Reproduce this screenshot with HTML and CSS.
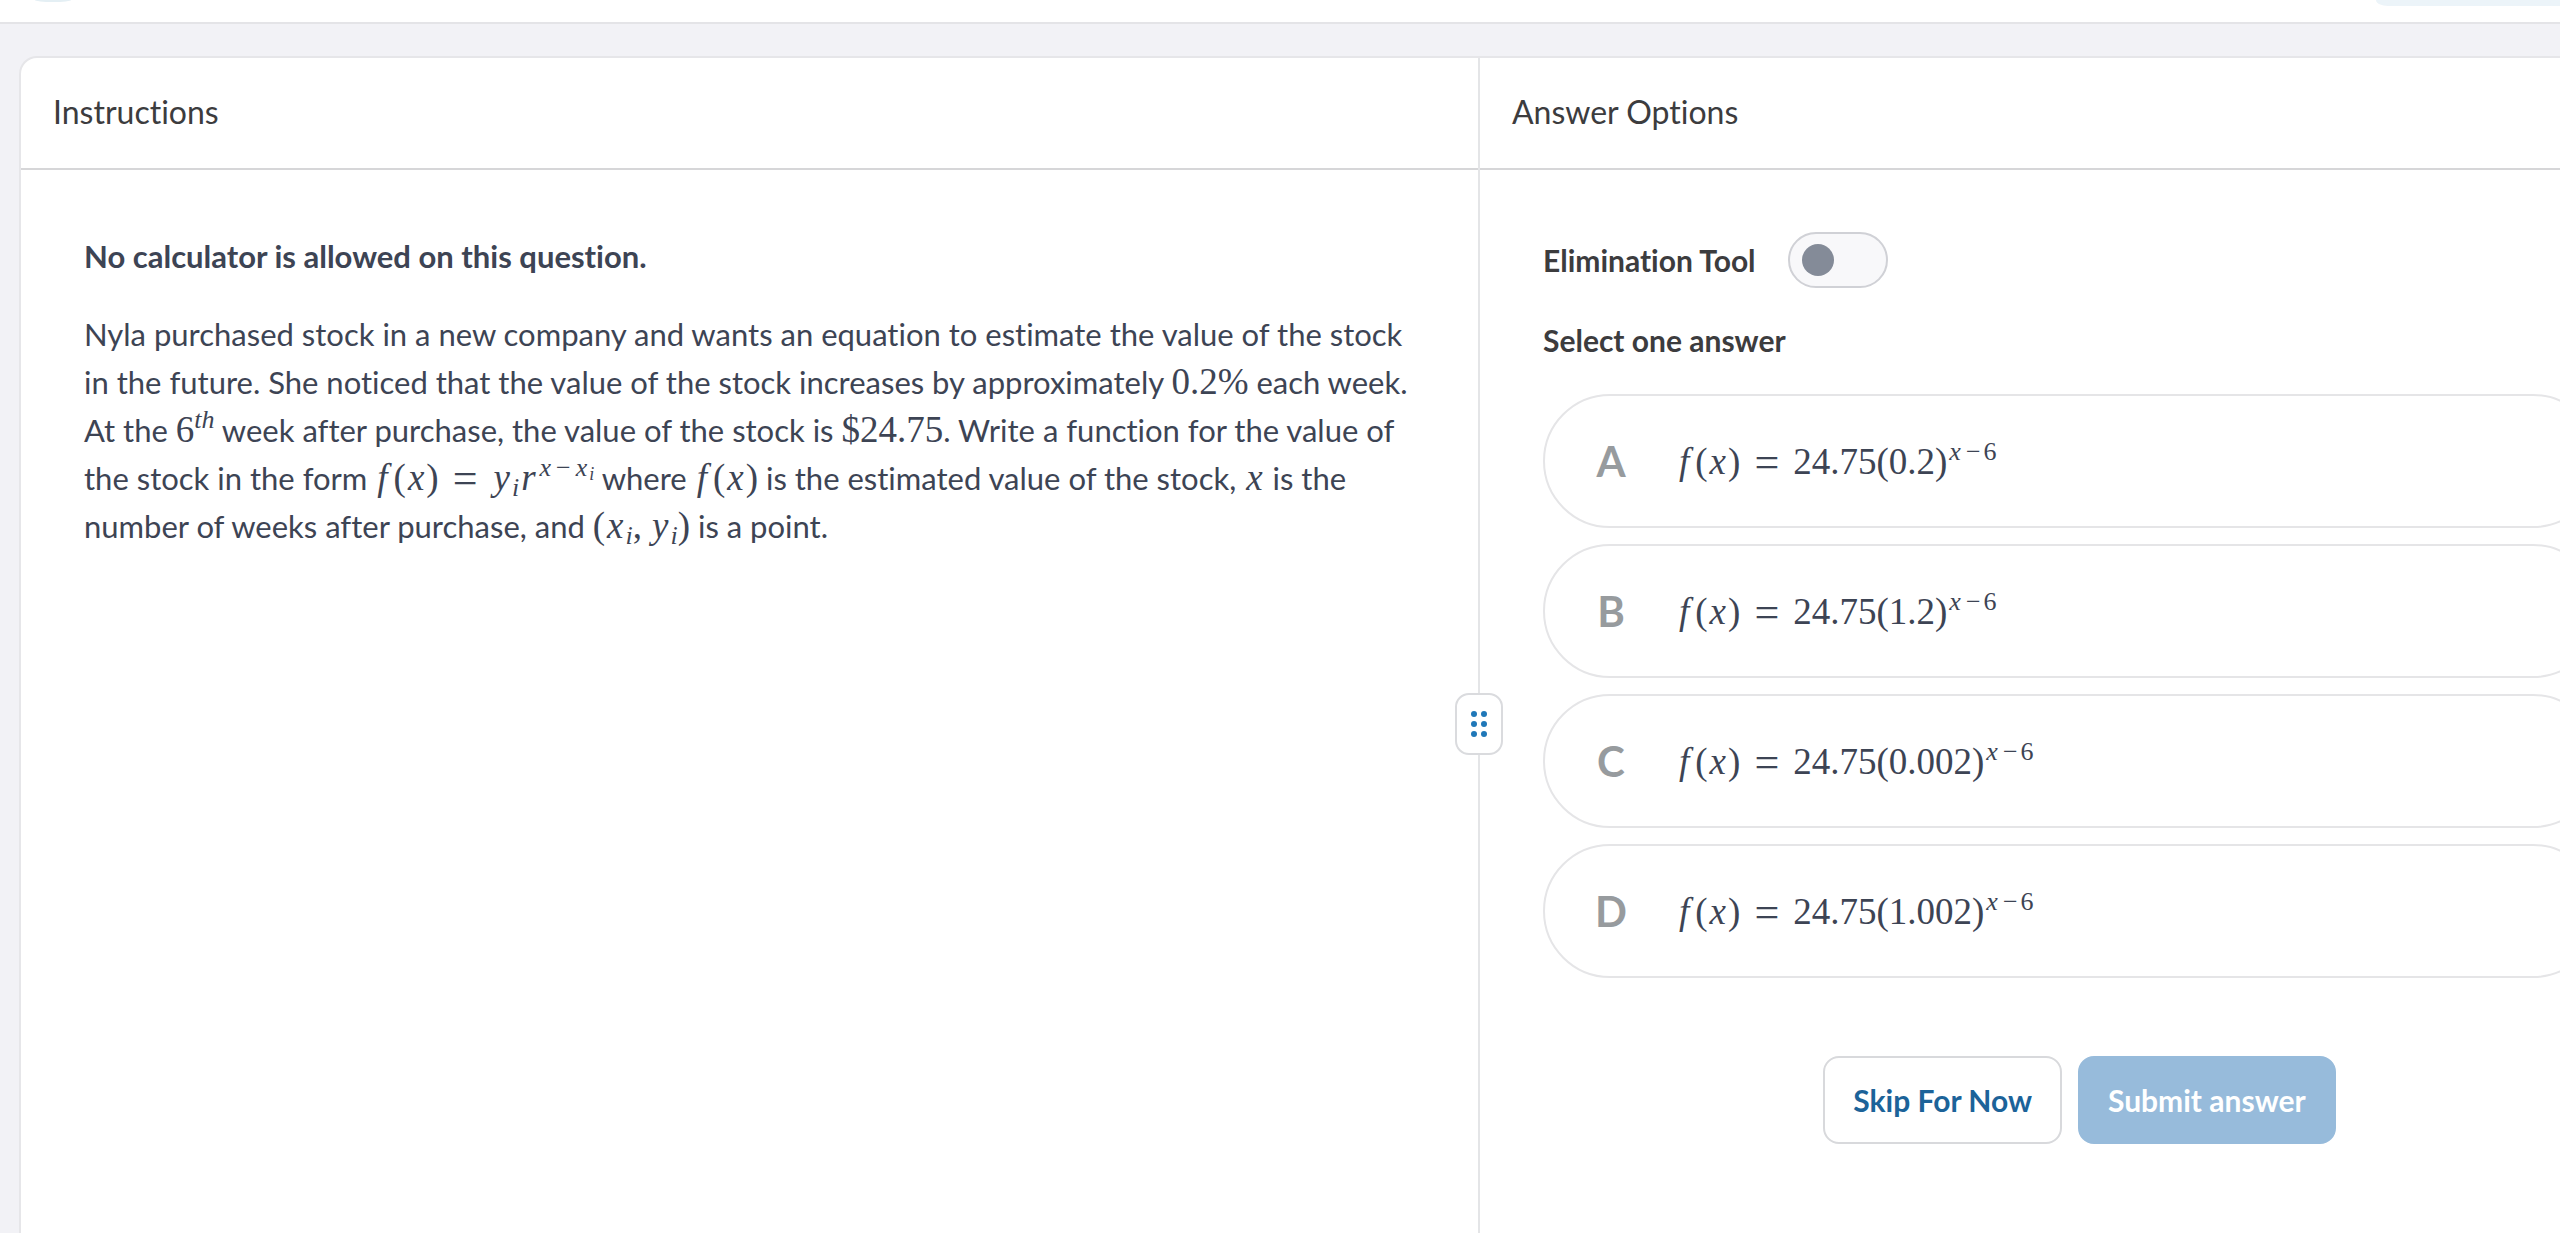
FILE: index.html
```html
<!DOCTYPE html>
<html lang="en">
<head>
<meta charset="utf-8">
<title>Practice question</title>
<link rel="stylesheet" href="styles.css">
</head>
<body>
<header class="topbar">
  <span class="topbar-logo"></span>
  <span class="topbar-pill"></span>
</header>
<main class="workspace">
  <section class="pane pane-question">
    <h2 class="pane-title">Instructions</h2>
    <div class="pane-body">
      <p class="notice">No calculator is allowed on this question.</p>
      <p class="prompt">Nyla purchased stock in a new company and wants an equation to estimate the value of the stock in the future. She noticed that the value of the stock increases by approximately <span class="math">0.2%</span> each week. At the <span class="math">6<sup><i>th</i></sup></span> week after purchase, the value of the stock is <span class="math">$24.75</span>. Write a function for the value of the stock in the form <span class="math"><i class="fn">f</i>(<i class="var">x</i>)<span class="rel">=</span><i class="var">y</i><sub><i>i</i></sub><i class="var">r</i><sup><i class="var">x</i><span class="op">−</span><i class="var">x</i><small><i>i</i></small></sup></span> where <span class="math"><i class="fn">f</i>(<i class="var">x</i>)</span> is the estimated value of the stock, <span class="math"><i class="var">x</i></span> is the number of weeks after purchase, and <span class="math">(<i class="var">x</i><sub><i>i</i></sub><span class="comma">,</span><i class="var">y</i><sub><i>i</i></sub>)</span> is a point.</p>
    </div>
  </section>
  <div class="divider">
    <button class="grip" type="button" aria-label="Resize panes">
      <svg width="16" height="26" viewBox="0 0 16 26" fill="#1f78b8"><circle cx="3" cy="3" r="3"/><circle cx="13" cy="3" r="3"/><circle cx="3" cy="13" r="3"/><circle cx="13" cy="13" r="3"/><circle cx="3" cy="23" r="3"/><circle cx="13" cy="23" r="3"/></svg>
    </button>
  </div>
  <section class="pane pane-answers">
    <h2 class="pane-title">Answer Options</h2>
    <form class="pane-body">
      <div class="tool-row">
        <label class="label" for="elimination">Elimination Tool</label>
        <input class="switch" type="checkbox" role="switch" id="elimination">
      </div>
      <fieldset class="options">
        <legend class="label">Select one answer</legend>
        <label class="option"><input class="option-input" type="radio" name="answer"><span class="letter">A</span><span class="math"><i class="fn">f</i>(<i class="var">x</i>)<span class="rel">=</span>24.75(0.2)<sup><i class="var">x</i><span class="op">−</span>6</sup></span></label>
        <label class="option"><input class="option-input" type="radio" name="answer"><span class="letter">B</span><span class="math"><i class="fn">f</i>(<i class="var">x</i>)<span class="rel">=</span>24.75(1.2)<sup><i class="var">x</i><span class="op">−</span>6</sup></span></label>
        <label class="option"><input class="option-input" type="radio" name="answer"><span class="letter">C</span><span class="math"><i class="fn">f</i>(<i class="var">x</i>)<span class="rel">=</span>24.75(0.002)<sup><i class="var">x</i><span class="op">−</span>6</sup></span></label>
        <label class="option"><input class="option-input" type="radio" name="answer"><span class="letter">D</span><span class="math"><i class="fn">f</i>(<i class="var">x</i>)<span class="rel">=</span>24.75(1.002)<sup><i class="var">x</i><span class="op">−</span>6</sup></span></label>
      </fieldset>
      <div class="actions">
        <button class="btn" type="button">Skip For Now</button>
        <button class="btn btn-primary" type="submit" disabled>Submit answer</button>
      </div>
    </form>
  </section>
</main>
</body>
</html>
```
FILE: styles.css
```css
* {
  box-sizing: border-box;
}

html {
  height: 100%;
  overflow: hidden;
}

body {
  display: flex;
  flex-direction: column;
  height: 100%;
  margin: 0;
  overflow: hidden;
  background: #f2f2f6;
  color: #3c3c3e;
  font-family: Lato, "Liberation Sans", sans-serif;
  font-size: 31px;
  font-variant-ligatures: none;
  line-height: 48px;
}

.topbar {
  display: flex;
  flex: none;
  justify-content: space-between;
  align-items: flex-start;
  height: 24px;
  padding-left: 35px;
  background: #fff;
  border-bottom: 2px solid #e4e4e7;
}

.topbar-logo {
  width: 36px;
  height: 2px;
  border-radius: 0 0 18px 18px / 0 0 2px 2px;
  background: #e4eff4;
}

.topbar-pill {
  width: 184px;
  height: 6px;
  border-bottom-left-radius: 12px 6px;
  background: #ecf4f9;
}

/* The workspace is wider than the window and runs off its right edge. */
.workspace {
  display: flex;
  flex: 1;
  width: calc(100% + 86px);
  margin: 32px 0 0 19px;
  background: #fff;
  border: 2px solid #e6e6e9;
  border-bottom: 0;
  border-radius: 18px 18px 0 0;
}

.pane {
  min-width: 0;
}

.pane-question {
  flex: 1457;
}

.pane-answers {
  flex: 1183;
}

.pane-title {
  margin: 0;
  padding: 30px 32px 32px;
  border-bottom: 2px solid #d6d6d8;
  font-size: 32px;
  font-weight: 400;
}

.pane-body {
  padding: 62px 63px;
}

.notice,
.prompt {
  margin: 0 0 30px;
  color: #3d4454;
}

.notice {
  font-weight: 700;
}

.divider {
  display: flex;
  justify-content: center;
  align-items: center;
  width: 2px;
  background: #e4e5e7;
}

.grip {
  display: flex;
  flex: none;
  justify-content: center;
  align-items: center;
  z-index: 1;
  width: 48px;
  height: 62px;
  margin-top: 156px;
  padding: 0;
  background: #fff;
  border: 2px solid #dadbde;
  border-radius: 14px;
}

.tool-row {
  display: flex;
  align-items: center;
  gap: 32px;
  height: 56px;
  margin-bottom: 28px;
}

.label {
  padding: 0;
  font-size: 30px;
  font-weight: 700;
}

.switch {
  display: flex;
  align-items: center;
  width: 100px;
  height: 56px;
  margin: 0;
  padding: 0 12px;
  appearance: none;
  background: #f8f8fa;
  border: 2px solid #d0d1d6;
  border-radius: 28px;
}

.switch::before {
  content: "";
  width: 32px;
  height: 32px;
  border-radius: 50%;
  background: #848b98;
}

.options {
  display: flex;
  flex-direction: column;
  gap: 16px;
  margin: 0;
  padding: 0;
  border: 0;
}

.options legend {
  margin-bottom: 30px;
}

.option {
  display: flex;
  align-items: center;
  gap: 40px;
  height: 134px;
  padding: 0 40px;
  border: 2px solid #e5e5e7;
  border-radius: 67px;
  color: #3d4454;
}

.option-input {
  position: absolute;
  appearance: none;
  margin: 0;
}

.letter {
  width: 52px;
  color: #979b9e;
  font-size: 42px;
  font-weight: 700;
  text-align: center;
}

.math {
  font-family: "Liberation Serif", serif;
  font-size: 37px;
  line-height: 1;
  white-space: nowrap;
}

.math sup,
.math sub {
  font-size: 26px;
  line-height: 0;
}

.math sup {
  vertical-align: 14px;
}

.math sub {
  vertical-align: -6px;
}

.math small {
  font-size: 18px;
  vertical-align: -4px;
}

.fn {
  margin: 0 6px 0 2px;
}

.var {
  margin: 0 2px;
}

.rel {
  margin: 0 14px;
  font-size: 44px;
  line-height: 0;
  vertical-align: -3px;
}

.op {
  margin: 0 3px;
}

.comma {
  margin-right: 8px;
}

.actions {
  display: flex;
  justify-content: center;
  gap: 16px;
  margin-top: 78px;
  padding-left: 16px;
}

.btn {
  height: 88px;
  padding: 0 28px;
  background: #fff;
  border: 2px solid #d8d9dc;
  border-radius: 16px;
  color: #1c6399;
  font: 700 30px/48px Lato, "Liberation Sans", sans-serif;
}

.btn-primary {
  background: #97bbdb;
  border-color: #97bbdb;
  color: #fff;
}
```
